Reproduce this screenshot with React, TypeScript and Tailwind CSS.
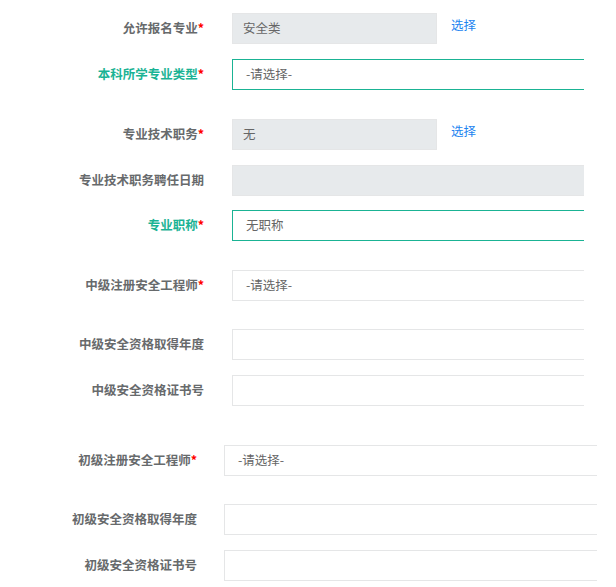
import React from 'react';

type Row = {
  label: string;
  required?: boolean;
  green?: boolean;
  value?: string;
  kind: 'gray' | 'white' | 'green';
  pick?: boolean;
  mt: string;
  lower?: boolean;
};

const rows: Row[] = [
  { label: '允许报名专业', required: true, value: '安全类', kind: 'gray', pick: true, mt: 'mt-[13px]' },
  { label: '本科所学专业类型', required: true, green: true, value: '-请选择-', kind: 'green', mt: 'mt-[15px]' },
  { label: '专业技术职务', required: true, value: '无', kind: 'gray', pick: true, mt: 'mt-[29px]' },
  { label: '专业技术职务聘任日期', kind: 'gray', mt: 'mt-[15px]' },
  { label: '专业职称', required: true, green: true, value: '无职称', kind: 'green', mt: 'mt-[14px]' },
  { label: '中级注册安全工程师', required: true, value: '-请选择-', kind: 'white', mt: 'mt-[29px]' },
  { label: '中级安全资格取得年度', kind: 'white', mt: 'mt-[28px]' },
  { label: '中级安全资格证书号', kind: 'white', mt: 'mt-[15px]' },
  { label: '初级注册安全工程师', required: true, value: '-请选择-', kind: 'white', mt: 'mt-[39px]', lower: true },
  { label: '初级安全资格取得年度', kind: 'white', mt: 'mt-[28px]', lower: true },
  { label: '初级安全资格证书号', kind: 'white', mt: 'mt-[15px]', lower: true },
];

const FormRow = ({ row }: { row: Row }) => {
  const boxClass =
    row.kind === 'gray'
      ? 'bg-[#e7eaec] border-[#e5e6e7]'
      : row.kind === 'green'
      ? 'bg-white border-[#1ab394]'
      : 'bg-white border-[#e5e6e7]';

  const widthClass = row.pick ? 'w-[205px]' : row.lower ? 'w-[373px] border-r-0' : 'w-[352px] border-r-0';

  return (
    <div className={`flex items-center ${row.mt}`}>
      <div
        className={`${row.lower ? 'w-[197px]' : 'w-[204px]'} text-right font-bold text-[12.5px] leading-[18px] -mt-[2px] ${
          row.green ? 'text-[#1ab394]' : 'text-[#676a6c]'
        }`}
      >
        {row.label}
        {row.required && <span className="text-[#ff0000]">*</span>}
      </div>
      <div
        className={`${row.lower ? 'ml-[27px]' : 'ml-[28px]'} h-[31px] border ${boxClass} ${widthClass} flex items-center ${
          row.kind === 'gray' ? 'pl-[10px]' : 'pl-[13px]'
        } text-[12.5px] text-[#666666]`}
      >
        {row.value}
      </div>
      {row.pick && (
        <a href="#" className="ml-[14px] self-start -mt-[1px] leading-[26px] text-[12.5px] text-[#1c84f0]">
          选择
        </a>
      )}
    </div>
  );
};

export default function App() {
  return (
    <div
      className="w-[616px] h-[587px] bg-white overflow-hidden"
      style={{ fontFamily: '"Noto Sans CJK SC", "Noto Sans", sans-serif' }}
    >
      <div className="flex flex-col">
        {rows.map((row, i) => (
          <FormRow key={i} row={row} />
        ))}
      </div>
    </div>
  );
}
